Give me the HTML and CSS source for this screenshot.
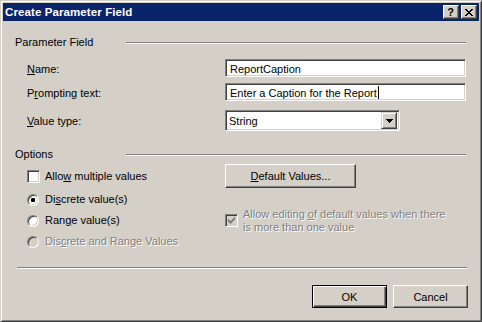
FILE: index.html
```html
<!DOCTYPE html>
<html>
<head>
<meta charset="utf-8">
<link rel="stylesheet" href="styles.css">
</head>
<body>
<div class="window">
  <div class="titlebar">
    <span class="title">Create Parameter Field</span>
    <div class="tbtns">
      <div class="tbtn help">?</div>
      <div class="tbtn">
        <svg width="8" height="7" viewBox="0 0 8 7" shape-rendering="crispEdges"><path fill="#000" d="M0 0h2v1H0z M6 0h2v1H6z M1 1h2v1H1z M5 1h2v1H5z M2 2h4v1H2z M3 3h2v1H3z M2 4h4v1H2z M1 5h2v1H1z M5 5h2v1H5z M0 6h2v1H0z M6 6h2v1H6z"/></svg>
      </div>
    </div>
  </div>
  <div class="client">
    <div class="head"><span class="head-label">Parameter Field</span><div class="etch"></div></div>
    <div class="form">
      <div class="row"><span class="label"><u>N</u>ame:</span><div class="edit">ReportCaption</div></div>
      <div class="row"><span class="label">P<u>r</u>ompting text:</span><div class="edit">Enter a Caption for the Report<span class="caret"></span></div></div>
      <div class="row combo-row"><span class="label"><u>V</u>alue type:</span>
        <div class="combo"><span class="combo-text">String</span>
          <div class="combo-btn"><svg width="7" height="4" viewBox="0 0 7 4" shape-rendering="crispEdges"><path fill="#000" d="M0 0h7v1H0z M1 1h5v1H1z M2 2h3v1H2z M3 3h1v1H3z"/></svg></div>
        </div>
      </div>
    </div>
    <div class="head options-head"><span class="head-label">Options</span><div class="etch"></div></div>
    <div class="options">
      <div class="opt"><span class="check"></span><span>Allo<u>w</u> multiple values</span></div>
      <div class="btn default-values"><span><u>D</u>efault Values...</span></div>
      <div class="opt r2"><span class="radio-wrap"><span class="radio"><span class="dot"></span></span></span><span>Di<u>s</u>crete value(s)</span></div>
      <div class="opt r3"><span class="radio-wrap"><span class="radio"></span></span><span>Ran<u>g</u>e value(s)</span></div>
      <div class="opt r3c2 disabled"><span class="check check-dis"><svg width="7" height="7" viewBox="0 0 7 7" shape-rendering="crispEdges"><path fill="#808080" d="M6 0h1v1H6z M5 1h2v1H5z M0 2h1v1H0z M4 2h3v1H4z M0 3h2v1H0z M3 3h3v1H3z M0 4h5v1H0z M1 5h3v1H1z M2 6h1v1H2z"/></svg></span><span class="two-line">Allow editing <u>o</u>f default values when there<br>is more than one value</span></div>
      <div class="opt r4 disabled"><span class="radio-wrap"><span class="radio radio-dis"></span></span><span>Dis<u>c</u>rete and Range Values</span></div>
    </div>
    <div class="sep"></div>
    <div class="footer">
      <div class="btn btn-default"><span>OK</span></div>
      <div class="btn"><span>Cancel</span></div>
    </div>
  </div>
</div>
</body>
</html>
```
FILE: styles.css
```css
html, body {
  margin: 0;
  padding: 0;
  background: #D4D0C8;
}
body {
  font-family: "Liberation Sans", Arial, sans-serif;
  font-size: 11px;
  line-height: 13px;
  color: #000;
}
u {
  text-decoration: underline;
  text-underline-offset: 1px;
}
.window {
  width: 482px;
  height: 322px;
  box-sizing: border-box;
  background: #D4D0C8;
  border: 1px solid;
  border-color: #D4D0C8 #404040 #404040 #D4D0C8;
  box-shadow: inset 1px 1px #fff, inset -1px -1px #808080;
  padding: 2px;
  display: flex;
  flex-direction: column;
}
.titlebar {
  height: 18px;
  flex: none;
  background: #0A246A;
  color: #fff;
  font-weight: bold;
  display: flex;
  align-items: center;
  justify-content: space-between;
  padding: 0 2px;
}
.title {
  font-size: 11.5px;
  line-height: 13px;
  padding-top: 1px;
  letter-spacing: 0.1px;
}
.tbtns {
  display: flex;
  gap: 2px;
}
.tbtn {
  width: 16px;
  height: 14px;
  box-sizing: border-box;
  background: #D4D0C8;
  border: 1px solid;
  border-color: #fff #404040 #404040 #fff;
  box-shadow: inset -1px -1px #808080;
  display: flex;
  align-items: center;
  justify-content: center;
  color: #000;
}
.tbtn.help {
  font-size: 11px;
  font-weight: bold;
  line-height: 12px;
  padding-right: 1px;
}
.client {
  flex: 1;
  padding: 15px 13px 0 12px;
  display: flex;
  flex-direction: column;
}
.head {
  display: flex;
  align-items: center;
  height: 13px;
}
.head-label {
  width: 111px;
  flex: none;
}
.etch {
  flex: 1;
  height: 0;
  border-top: 1px solid #808080;
  border-bottom: 1px solid #fff;
}
.form {
  margin-top: 10px;
  padding-left: 12px;
}
.row {
  display: flex;
  align-items: center;
}
.row + .row {
  margin-top: 6px;
}
.row.combo-row {
  margin-top: 9px;
}
.label {
  width: 198px;
  flex: none;
  padding-top: 2px;
}
.edit {
  flex: 1;
  height: 18px;
  box-sizing: border-box;
  border: 1px solid;
  border-color: #808080 #fff #fff #808080;
  box-shadow: inset 1px 1px #404040, inset -1px -1px #D4D0C8;
  background: #fff;
  padding: 1px 4px 0;
  line-height: 14px;
  white-space: nowrap;
  display: flex;
  align-items: center;
}
.caret {
  display: inline-block;
  width: 1px;
  height: 13px;
  background: #000;
  margin-left: 1px;
}
.combo {
  width: 175px;
  height: 21px;
  box-sizing: border-box;
  border: 1px solid;
  border-color: #808080 #fff #fff #808080;
  box-shadow: inset 1px 1px #404040, inset -1px -1px #D4D0C8;
  background: #fff;
  padding: 2px 2px 2px 3px;
  display: flex;
  align-items: center;
  justify-content: space-between;
}
.combo-text {
  padding-top: 1px;
}
.combo-btn {
  width: 16px;
  height: 17px;
  box-sizing: border-box;
  background: #D4D0C8;
  border: 1px solid;
  border-color: #D4D0C8 #404040 #404040 #D4D0C8;
  box-shadow: inset 1px 1px #fff, inset -1px -1px #808080;
  display: flex;
  align-items: center;
  justify-content: center;
}
.options-head {
  margin-top: 17px;
}
.options {
  margin-top: 3px;
  padding-left: 12px;
  display: grid;
  grid-template-columns: 198px 1fr;
  grid-template-rows: 25px 21px 21px 21px;
  align-items: center;
}
.opt {
  display: flex;
  align-items: center;
  gap: 5px;
  white-space: nowrap;
}
.r2 { grid-row: 2; grid-column: 1; }
.r3 { grid-row: 3; grid-column: 1; }
.r3c2 { grid-row: 3; grid-column: 2; }
.r4 { grid-row: 4; grid-column: 1; }
.check {
  width: 13px;
  height: 13px;
  flex: none;
  box-sizing: border-box;
  border: 1px solid;
  border-color: #808080 #fff #fff #808080;
  box-shadow: inset 1px 1px #404040, inset -1px -1px #D4D0C8;
  background: #fff;
  display: flex;
  align-items: center;
  justify-content: center;
}
.check-dis {
  background: #D4D0C8;
}
.radio-wrap {
  width: 13px;
  height: 13px;
  flex: none;
  display: flex;
  align-items: center;
  justify-content: flex-start;
}
.radio {
  width: 12px;
  height: 12px;
  box-sizing: border-box;
  border-radius: 50%;
  border: 1px solid;
  border-color: #808080 #fff #fff #808080;
  box-shadow: inset 1px 1px #404040, inset -1px -1px #D4D0C8;
  background: #fff;
  display: flex;
  align-items: center;
  justify-content: center;
}
.radio-dis {
  background: #D4D0C8;
}
.dot {
  width: 4px;
  height: 4px;
  border-radius: 1px;
  background: #000;
}
.disabled {
  color: #808080;
  text-shadow: 1px 1px 0 #fff;
}
.two-line {
  line-height: 13px;
}
.btn {
  box-sizing: border-box;
  background: #D4D0C8;
  border: 1px solid;
  border-color: #fff #404040 #404040 #fff;
  box-shadow: inset -1px -1px #808080;
  display: flex;
  align-items: center;
  justify-content: center;
  padding-top: 1px;
}
.default-values {
  grid-row: 1;
  grid-column: 2;
  align-self: start;
  width: 131px;
  height: 24px;
}
.sep {
  margin-top: 15px;
  margin-left: 2px;
  margin-right: -1px;
  border-top: 1px solid #808080;
  border-bottom: 1px solid #fff;
}
.footer {
  margin-top: 16px;
  margin-right: -2px;
  display: flex;
  justify-content: flex-end;
  gap: 6px;
}
.footer .btn {
  width: 75px;
  height: 23px;
}
.btn-default {
  border-color: #000;
  box-shadow: inset 1px 1px #fff, inset -1px -1px #404040, inset -2px -2px #808080;
}
```
